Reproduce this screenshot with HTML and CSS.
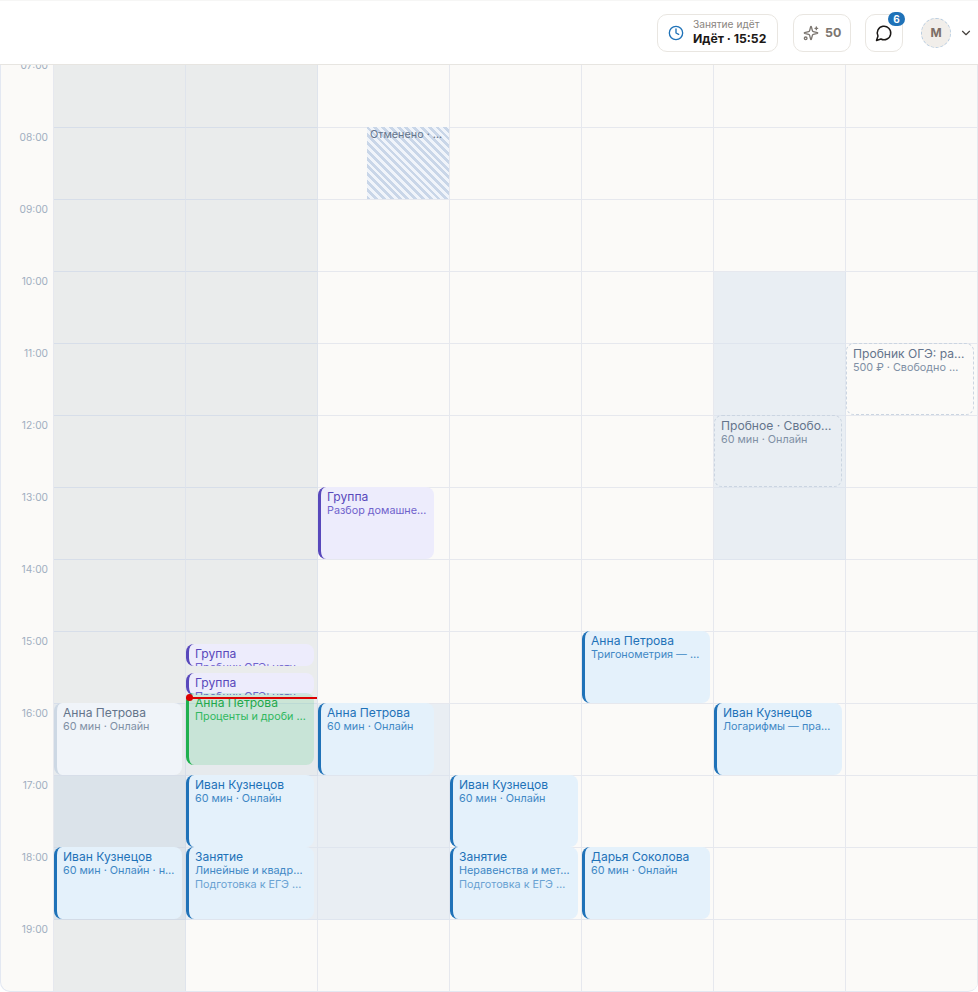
FILE: index.html
```html
<!DOCTYPE html>
<html lang="ru">
<head>
    <meta charset="UTF-8">
    <meta name="viewport" content="width=device-width, initial-scale=1.0">
    <title>Расписание</title>
    <link rel="stylesheet" href="styles.css">
</head>
<body>
    <header class="topbar">
        <div class="tool-btn lesson-btn">
            <svg class="icon clock-icon" viewBox="0 0 24 24"><circle cx="12" cy="12" r="10"/><polyline points="12 6 12 12 16 14"/></svg>
            <div class="lesson-text">
                <span class="lesson-label">Занятие идёт</span>
                <span class="lesson-time">Идёт · 15:52</span>
            </div>
        </div>
        <div class="tool-btn points-btn">
            <svg class="icon spark-icon" viewBox="0 0 24 24"><path d="M9.937 15.5A2 2 0 0 0 8.5 14.063l-6.135-1.582a.5.5 0 0 1 0-.962L8.5 9.936A2 2 0 0 0 9.937 8.5l1.582-6.135a.5.5 0 0 1 .963 0L14.063 8.5A2 2 0 0 0 15.5 9.937l6.135 1.581a.5.5 0 0 1 0 .964L15.5 14.063a2 2 0 0 0-1.437 1.437l-1.582 6.135a.5.5 0 0 1-.963 0z"/><path d="M20 3v4"/><path d="M22 5h-4"/><circle cx="4" cy="20" r="2"/></svg>
            <span>50</span>
        </div>
        <div class="tool-btn chat-btn">
            <svg class="icon chat-icon" viewBox="0 0 24 24"><path d="M7.9 20A9 9 0 1 0 4 16.1L2 22Z"/></svg>
            <span class="badge">6</span>
        </div>
        <div class="avatar">M</div>
        <svg class="icon chevron-icon" viewBox="0 0 24 24"><path d="m6 9 6 6 6-6"/></svg>
    </header>

    <main class="calendar">
        <div class="weeks">
            <div class="row">
                <div class="time">07:00</div>
                <div class="cell off"></div><div class="cell off"></div><div class="cell"></div><div class="cell"></div><div class="cell"></div><div class="cell"></div><div class="cell"></div>
            </div>
            <div class="row">
                <div class="time">08:00</div>
                <div class="cell off"></div><div class="cell off"></div>
                <div class="cell">
                    <div class="cancelled"><div class="cancelled-text">Отменено · Анна Петрова</div></div>
                </div>
                <div class="cell"></div><div class="cell"></div><div class="cell"></div><div class="cell"></div>
            </div>
            <div class="row">
                <div class="time">09:00</div>
                <div class="cell off"></div><div class="cell off"></div><div class="cell"></div><div class="cell"></div><div class="cell"></div><div class="cell"></div><div class="cell"></div>
            </div>
            <div class="row">
                <div class="time">10:00</div>
                <div class="cell off"></div><div class="cell off"></div><div class="cell"></div><div class="cell"></div><div class="cell"></div><div class="cell busy"></div><div class="cell"></div>
            </div>
            <div class="row">
                <div class="time">11:00</div>
                <div class="cell off"></div><div class="cell off"></div><div class="cell"></div><div class="cell"></div><div class="cell"></div><div class="cell busy"></div>
                <div class="cell">
                    <div class="event draft">
                        <div class="event-title">Пробник ОГЭ: разбор</div>
                        <div class="event-sub">500 ₽ · Свободно место</div>
                    </div>
                </div>
            </div>
            <div class="row">
                <div class="time">12:00</div>
                <div class="cell off"></div><div class="cell off"></div><div class="cell"></div><div class="cell"></div><div class="cell"></div>
                <div class="cell busy">
                    <div class="event draft">
                        <div class="event-title">Пробное · Свободное окно</div>
                        <div class="event-sub">60 мин · Онлайн</div>
                    </div>
                </div>
                <div class="cell"></div>
            </div>
            <div class="row">
                <div class="time">13:00</div>
                <div class="cell off"></div><div class="cell off"></div>
                <div class="cell">
                    <div class="event purple narrow">
                        <div class="event-title">Группа</div>
                        <div class="event-sub">Разбор домашнего задания</div>
                    </div>
                </div>
                <div class="cell"></div><div class="cell"></div><div class="cell busy"></div><div class="cell"></div>
            </div>
            <div class="row">
                <div class="time">14:00</div>
                <div class="cell off"></div><div class="cell off"></div><div class="cell"></div><div class="cell"></div><div class="cell"></div><div class="cell"></div><div class="cell"></div>
            </div>
            <div class="row">
                <div class="time">15:00</div>
                <div class="cell off"></div>
                <div class="cell off">
                    <div class="event purple short first">
                        <div class="event-title">Группа</div>
                        <div class="event-sub">Пробник ОГЭ: устная часть</div>
                    </div>
                    <div class="event purple short second">
                        <div class="event-title">Группа</div>
                        <div class="event-sub">Пробник ОГЭ: устная часть</div>
                    </div>
                    <div class="event green">
                        <div class="event-title">Анна Петрова</div>
                        <div class="event-sub">Проценты и дроби в задачах</div>
                    </div>
                    <div class="now-line"></div>
                </div>
                <div class="cell"></div><div class="cell"></div>
                <div class="cell">
                    <div class="event blue">
                        <div class="event-title">Анна Петрова</div>
                        <div class="event-sub">Тригонометрия — практика</div>
                    </div>
                </div>
                <div class="cell"></div><div class="cell"></div>
            </div>
            <div class="row">
                <div class="time">16:00</div>
                <div class="cell off-busy">
                    <div class="event muted">
                        <div class="event-title">Анна Петрова</div>
                        <div class="event-sub">60 мин · Онлайн</div>
                    </div>
                </div>
                <div class="cell off-busy"></div>
                <div class="cell busy">
                    <div class="event blue narrow">
                        <div class="event-title">Анна Петрова</div>
                        <div class="event-sub">60 мин · Онлайн</div>
                    </div>
                </div>
                <div class="cell"></div><div class="cell"></div>
                <div class="cell">
                    <div class="event blue">
                        <div class="event-title">Иван Кузнецов</div>
                        <div class="event-sub">Логарифмы — практика</div>
                    </div>
                </div>
                <div class="cell"></div>
            </div>
            <div class="row">
                <div class="time">17:00</div>
                <div class="cell off-dark"></div>
                <div class="cell busy">
                    <div class="event blue">
                        <div class="event-title">Иван Кузнецов</div>
                        <div class="event-sub">60 мин · Онлайн</div>
                    </div>
                </div>
                <div class="cell busy"></div>
                <div class="cell">
                    <div class="event blue">
                        <div class="event-title">Иван Кузнецов</div>
                        <div class="event-sub">60 мин · Онлайн</div>
                    </div>
                </div>
                <div class="cell"></div><div class="cell"></div><div class="cell"></div>
            </div>
            <div class="row">
                <div class="time">18:00</div>
                <div class="cell off-dark">
                    <div class="event blue">
                        <div class="event-title">Иван Кузнецов</div>
                        <div class="event-sub">60 мин · Онлайн · новый ученик</div>
                    </div>
                </div>
                <div class="cell busy">
                    <div class="event blue">
                        <div class="event-title">Занятие</div>
                        <div class="event-sub">Линейные и квадратные уравнения</div>
                        <div class="event-note">Подготовка к ЕГЭ по математике</div>
                    </div>
                </div>
                <div class="cell busy"></div>
                <div class="cell">
                    <div class="event blue">
                        <div class="event-title">Занятие</div>
                        <div class="event-sub">Неравенства и методы решения</div>
                        <div class="event-note">Подготовка к ЕГЭ по математике</div>
                    </div>
                </div>
                <div class="cell">
                    <div class="event blue">
                        <div class="event-title">Дарья Соколова</div>
                        <div class="event-sub">60 мин · Онлайн</div>
                    </div>
                </div>
                <div class="cell"></div><div class="cell"></div>
            </div>
            <div class="row">
                <div class="time">19:00</div>
                <div class="cell off"></div><div class="cell"></div><div class="cell"></div><div class="cell"></div><div class="cell"></div><div class="cell"></div><div class="cell"></div>
            </div>
        </div>
    </main>
</body>
</html>
```

FILE: styles.css
```css
* {
    box-sizing: border-box;
}
body {
    font-family: Inter, "Noto Sans", sans-serif;
    margin: 0;
    height: 992px;
    overflow: hidden;
    background-color: #ffffff;
}

/* top bar */
.topbar {
    position: relative;
    z-index: 5;
    display: flex;
    justify-content: flex-end;
    align-items: center;
    height: 65px;
    padding: 0 5px 0 0;
    background: #ffffff;
    border-top: 1px solid #f6f6f5;
    border-bottom: 1px solid #e7e5e1;
}
.tool-btn {
    position: relative;
    display: flex;
    align-items: center;
    height: 38px;
    background: #ffffff;
    border: 1px solid #e9e6e1;
    border-radius: 10px;
}
.icon {
    fill: none;
    stroke: currentColor;
    stroke-width: 2;
    stroke-linecap: round;
    stroke-linejoin: round;
}
.lesson-btn {
    width: 121px;
    padding-left: 10px;
    gap: 9px;
}
.clock-icon {
    width: 16px;
    height: 16px;
    color: #1f72b8;
}
.lesson-text {
    display: flex;
    flex-direction: column;
}
.lesson-label {
    font-size: 10.2px;
    line-height: 13px;
    color: #8a8580;
}
.lesson-time {
    font-size: 12.2px;
    line-height: 16px;
    font-weight: 700;
    color: #1c1917;
}
.points-btn {
    width: 58px;
    margin-left: 15px;
    padding-left: 9px;
    gap: 6px;
    font-size: 12.4px;
    font-weight: 700;
    color: #7c7670;
}
.spark-icon {
    width: 16px;
    height: 16px;
}
.chat-btn {
    justify-content: center;
    width: 38px;
    margin-left: 14px;
}
.chat-icon {
    width: 18px;
    height: 18px;
    color: #1c1917;
}
.badge {
    position: absolute;
    top: -3px;
    right: -3px;
    width: 17px;
    height: 14px;
    border-radius: 7px;
    background: #1f72b8;
    color: #ffffff;
    font-size: 10px;
    font-weight: 700;
    line-height: 14px;
    text-align: center;
}
.avatar {
    width: 30px;
    height: 30px;
    margin-left: 18px;
    border: 1px dashed #b9cde0;
    border-radius: 50%;
    background: #f1eeea;
    color: #7c6f66;
    font-size: 12px;
    font-weight: 700;
    line-height: 28px;
    text-align: center;
}
.chevron-icon {
    width: 14px;
    height: 14px;
    margin-left: 8px;
    color: #44403c;
}

/* calendar */
.calendar {
    height: 927px;
    overflow: hidden;
    background: #fbfaf8;
    border: 1px solid #e3e8f2;
    border-top: none;
    border-right: none;
    border-radius: 0 0 10px 10px;
}
.weeks {
    margin-top: -9px;
}
.row {
    display: grid;
    grid-template-columns: 53px repeat(7, 132px);
    height: 72px;
}
.time {
    padding: 2px 5px 0 0;
    border-right: 1px solid #e6e8ee;
    color: #a0aec0;
    font-size: 10.2px;
    line-height: 14px;
    text-align: right;
}
.cell {
    position: relative;
    border-right: 1px solid #e6e8ee;
    border-bottom: 1px solid #e6e8ee;
}
.off {
    background: #eaecec;
    border-color: #dfe4ec;
    border-bottom-color: #d7dee9;
}
.busy {
    background: #e9eef3;
    border-color: #dfe5ee;
}
.off-busy {
    background: #e6eaed;
    border-color: #d7dee9;
}
.off-dark {
    background: #dbe3ea;
    border-color: #d3dbe6;
}

/* events */
.event {
    position: absolute;
    top: -1px;
    left: 0;
    z-index: 1;
    width: 128px;
    height: 72px;
    padding: 3px 7.5px 3px 6px;
    overflow: hidden;
    border-left: 3px solid;
    border-radius: 8px;
}
.event-title,
.event-sub,
.event-note,
.cancelled-text {
    overflow: hidden;
    white-space: nowrap;
    text-overflow: ellipsis;
}
.event-title {
    font-size: 12.1px;
    line-height: 14px;
    font-weight: 400;
}
.event-sub,
.event-note {
    font-size: 10.8px;
    line-height: 13px;
}
.event-note {
    margin-top: 1px;
    opacity: 0.75;
}
.blue {
    background: #e4f1fb;
    border-color: #1f72b8;
    color: #1f72b8;
}
.blue .event-sub,
.blue .event-note {
    color: #3f88c5;
}
.purple {
    background: #edecfc;
    border-color: #5848bb;
    color: #5848bb;
}
.purple .event-sub {
    color: #6f62cc;
}
.green {
    top: 61px;
    background: rgba(34, 197, 94, 0.15);
    border-color: #1fb04e;
    color: #1fa84c;
}
.green .event-sub {
    color: #30b860;
}
.muted {
    background: #f0f4f9;
    border-color: #cdd8e4;
    color: #64748b;
}
.muted .event-sub,
.draft .event-sub {
    color: #8090a5;
}
.draft {
    left: 0;
    width: 128px;
    padding-left: 6px;
    border: 1px dashed #cbd5e1;
    color: #64748b;
}
.narrow {
    width: 116px;
    padding-right: 6px;
}
.short {
    height: 22px;
}
.first {
    top: 12px;
}
.second {
    top: 41px;
}
.cancelled {
    position: absolute;
    top: -1px;
    right: 0;
    width: 82px;
    height: 72px;
    padding: 1px 3px;
    background: repeating-linear-gradient(45deg, #c9d6e8 0, #c9d6e8 2.75px, #f0f4fa 2.75px, #f0f4fa 5.5px);
}
.cancelled-text {
    color: #64748b;
    font-size: 10.8px;
    line-height: 13px;
}
.now-line {
    position: absolute;
    top: 65px;
    left: 0;
    right: 0;
    z-index: 2;
    height: 2px;
    background: #dd0000;
}
.now-line::before {
    content: "";
    position: absolute;
    top: -3px;
    left: 0;
    width: 7px;
    height: 7px;
    border-radius: 50%;
    background: #dd0000;
}
```
